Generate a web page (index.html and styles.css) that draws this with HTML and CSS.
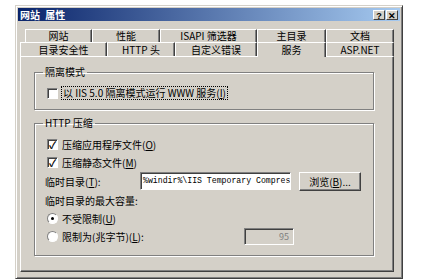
FILE: index.html
```html
<!DOCTYPE html>
<html lang="zh-CN">
<head>
  <meta charset="UTF-8" />
  <title>网站 属性</title>
  <link rel="stylesheet" href="styles.css">
</head>
<body>
  <div class="dialog">
    <div class="titlebar">
      <span class="title">网站 属性</span>
      <div class="caption-buttons">
        <span class="cap-btn">?</span>
        <span class="cap-btn">✕</span>
      </div>
    </div>

    <div class="tabs">
      <div class="tab-row back">
        <div class="tab w67">网站</div>
        <div class="tab w68">性能</div>
        <div class="tab w97">ISAPI 筛选器</div>
        <div class="tab w69">主目录</div>
        <div class="tab w68">文档</div>
      </div>
      <div class="tab-row front">
        <div class="tab w87">目录安全性</div>
        <div class="tab w68">HTTP 头</div>
        <div class="tab w82">自定义错误</div>
        <div class="tab w69 active">服务</div>
        <div class="tab w68">ASP.NET</div>
      </div>
    </div>

    <div class="panel">
      <fieldset class="group first">
        <legend>隔离模式</legend>
        <div class="row">
          <span class="check"></span>
          <span class="focus">以 IIS 5.0 隔离模式运行 WWW 服务(<u>I</u>)</span>
        </div>
      </fieldset>

      <fieldset class="group second">
        <legend>HTTP 压缩</legend>
        <div class="row">
          <span class="check checked">✓</span>
          <span>压缩应用程序文件(<u>O</u>)</span>
        </div>
        <div class="row">
          <span class="check checked">✓</span>
          <span>压缩静态文件(<u>M</u>)</span>
        </div>
        <div class="row dir-row">
          <span class="dir-label">临时目录(<u>T</u>):</span>
          <div class="field">%windir%\IIS Temporary Compres</div>
          <div class="button">浏览(<u>B</u>)...</div>
        </div>
        <div class="row plain">临时目录的最大容量:</div>
        <div class="row">
          <span class="radio selected"></span>
          <span>不受限制(<u>U</u>)</span>
        </div>
        <div class="row limit-row">
          <span class="radio"></span>
          <span class="limit-label">限制为(兆字节)(<u>L</u>):</span>
          <div class="field small disabled">95</div>
        </div>
      </fieldset>
    </div>
  </div>
</body>
</html>
```

FILE: styles.css
```css
body {
  margin: 0;
  padding: 5px 0 0 15px;
  height: 274px;
  background: #fff;
  font-family: "Noto Sans CJK SC", sans-serif;
  font-size: 10px;
  color: #000;
  overflow: hidden;
}
.dialog {
  width: 382px;
  height: 268px;
  background: #d4d0c8;
  border: 1px solid;
  border-color: #d4d0c8 #404040 #404040 #d4d0c8;
  box-shadow: inset 1px 1px 0 #fff, inset -1px -1px 0 #808080;
  padding: 2px;
}
.titlebar {
  height: 13px;
  display: flex;
  align-items: center;
  justify-content: space-between;
  padding-left: 2px;
  background: linear-gradient(to right, #0a246a, #a6caf0);
  color: #fff;
}
.title {
  font-weight: bold;
  font-size: 10px;
  line-height: 13px;
  word-spacing: 3px;
  white-space: pre;
}
.caption-buttons {
  display: flex;
  gap: 1px;
  padding-right: 2px;
}
.cap-btn {
  width: 12px;
  height: 10px;
  background: #d4d0c8;
  color: #000;
  font-family: "Liberation Sans", sans-serif;
  font-weight: bold;
  font-size: 9px;
  line-height: 10px;
  text-align: center;
  border: 1px solid;
  border-color: #fff #404040 #404040 #fff;
  box-sizing: border-box;
}
.tabs {
  margin-top: 8px;
}
.tab-row {
  display: flex;
}
.tab-row.back {
  margin-left: 7px;
  height: 13px;
}
.tab-row.front {
  margin-left: 2px;
  height: 14px;
}
.tab {
  box-sizing: border-box;
  border-top: 1px solid #fff;
  border-left: 1px solid #fff;
  border-right: 1px solid #404040;
  box-shadow: inset -1px 0 0 #808080;
  text-align: center;
  line-height: 12px;
}
.tab-row.front .tab {
  line-height: 13px;
}
.tab.active {
  position: relative;
  height: 15px;
  line-height: 10px;
  background: #d4d0c8;
  z-index: 1;
}
.w67 { width: 67px; }
.w68 { width: 68px; }
.w69 { width: 69px; }
.w82 { width: 82px; }
.w87 { width: 87px; }
.w97 { width: 97px; }
.panel {
  margin-left: 2px;
  width: 374px;
  height: 216px;
  box-sizing: border-box;
  border: 1px solid;
  border-color: #fff #404040 #404040 #fff;
  box-shadow: inset -1px -1px 0 #808080;
  padding: 9px 19px 0 13px;
}
.group {
  margin: 0;
  min-width: 0;
  border: 1px solid #808080;
  box-shadow: inset 1px 1px 0 #fff, 1px 1px 0 #fff;
  padding: 0 0 0 12px;
}
.group legend {
  padding: 0 2px;
  margin-left: -4px;
  line-height: 12px;
}
.group.first {
  padding-top: 6px;
  padding-bottom: 7px;
}
.group.second {
  margin-top: 7px;
  padding-top: 6px;
  padding-bottom: 10px;
}
.row {
  display: flex;
  align-items: center;
  height: 18px;
  gap: 4px;
}
.row.plain {
  margin-left: -2px;
}
.check {
  width: 11px;
  height: 11px;
  box-sizing: border-box;
  background: #fff;
  border: 1px solid;
  border-color: #808080 #fff #fff #808080;
  box-shadow: inset 1px 1px 0 #404040;
  font-size: 10px;
  line-height: 9px;
  text-align: center;
  font-weight: bold;
}
.focus {
  outline: 1px dotted #000;
  outline-offset: 0;
  padding: 0 1px;
  line-height: 12px;
}
.radio {
  width: 11px;
  height: 11px;
  box-sizing: border-box;
  border-radius: 50%;
  background: #fff;
  border: 1px solid;
  border-color: #808080 #fff #fff #808080;
  position: relative;
}
.radio.selected::after {
  content: "";
  position: absolute;
  left: 3px;
  top: 3px;
  width: 3px;
  height: 3px;
  border-radius: 50%;
  background: #000;
}
.dir-row {
  height: 20px;
  margin-left: -2px;
  gap: 0;
}
.dir-label {
  width: 95px;
}
.field {
  width: 151px;
  height: 18px;
  box-sizing: border-box;
  background: #fff;
  border: 1px solid;
  border-color: #808080 #fff #fff #808080;
  box-shadow: inset 1px 1px 0 #404040;
  font-family: "Liberation Mono", monospace;
  font-size: 8.2px;
  line-height: 16px;
  padding-left: 2px;
  white-space: nowrap;
  overflow: hidden;
}
.button {
  margin-left: 8px;
  width: 62px;
  height: 19px;
  box-sizing: border-box;
  border: 1px solid;
  border-color: #fff #404040 #404040 #fff;
  box-shadow: inset -1px -1px 0 #808080;
  text-align: center;
  line-height: 17px;
}
.limit-row {
  gap: 4px;
}
.limit-label {
  width: 178px;
}
.field.small {
  width: 50px;
  height: 17px;
  text-align: right;
  padding-right: 4px;
  font-family: "Noto Sans CJK SC", sans-serif;
  font-size: 9px;
  line-height: 15px;
}
.field.disabled {
  background: #d4d0c8;
  color: #808080;
}
```
